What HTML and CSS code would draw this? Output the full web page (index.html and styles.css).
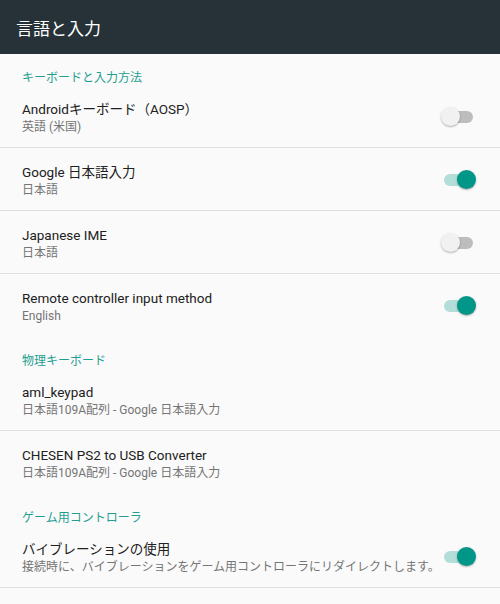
FILE: index.html
```html
<!DOCTYPE html>
<html lang="ja">
<head>
<meta charset="utf-8">
<title>言語と入力</title>
<link rel="stylesheet" href="styles.css">
</head>
<body>
<header class="appbar"><h1 class="appbar-title">言語と入力</h1></header>
<main class="list">
  <div class="section-title">キーボードと入力方法</div>
  <div class="item divided">
    <div class="texts"><div class="title">Androidキーボード（AOSP）</div><div class="sub">英語 (米国)</div></div>
    <span class="switch off"><span class="thumb"></span></span>
  </div>
  <div class="item divided">
    <div class="texts"><div class="title">Google 日本語入力</div><div class="sub">日本語</div></div>
    <span class="switch on"><span class="thumb"></span></span>
  </div>
  <div class="item divided">
    <div class="texts"><div class="title">Japanese IME</div><div class="sub">日本語</div></div>
    <span class="switch off"><span class="thumb"></span></span>
  </div>
  <div class="item">
    <div class="texts"><div class="title">Remote controller input method</div><div class="sub">English</div></div>
    <span class="switch on"><span class="thumb"></span></span>
  </div>
  <div class="section-title">物理キーボード</div>
  <div class="item divided">
    <div class="texts"><div class="title">aml_keypad</div><div class="sub">日本語109A配列 - Google 日本語入力</div></div>
  </div>
  <div class="item">
    <div class="texts"><div class="title">CHESEN PS2 to USB Converter</div><div class="sub">日本語109A配列 - Google 日本語入力</div></div>
  </div>
  <div class="section-title">ゲーム用コントローラ</div>
  <div class="item divided">
    <div class="texts"><div class="title">バイブレーションの使用</div><div class="sub">接続時に、バイブレーションをゲーム用コントローラにリダイレクトします。</div></div>
    <span class="switch on"><span class="thumb"></span></span>
  </div>
</main>
</body>
</html>
```

FILE: styles.css
```css
html, body {
  margin: 0;
  padding: 0;
  background: #fafafa;
  font-family: Roboto, "Noto Sans CJK JP", sans-serif;
}
.appbar {
  height: 54px;
  background: #263238;
  display: flex;
  align-items: center;
  padding: 0 16px;
  box-sizing: border-box;
}
.appbar-title {
  margin: 0;
  font-size: 17px;
  font-weight: 400;
  color: #ffffff;
}
.list {
  display: flex;
  flex-direction: column;
}
.section-title {
  height: 31px;
  box-sizing: border-box;
  padding: 18px 22px 0;
  font-size: 12px;
  line-height: 13px;
  color: #1f9e91;
}
.item {
  height: 63px;
  box-sizing: border-box;
  padding: 15px 27px 0 22px;
  display: flex;
  align-items: flex-start;
  justify-content: space-between;
  border-bottom: 1px solid transparent;
}
.item.divided {
  border-bottom-color: #dedede;
}
.texts {
  display: flex;
  flex-direction: column;
}
.title {
  font-size: 13.5px;
  line-height: 18px;
  color: #212121;
}
.sub {
  font-size: 12px;
  line-height: 18px;
  color: #757575;
}
.switch {
  position: relative;
  width: 29px;
  height: 12px;
  border-radius: 6px;
  margin-top: 11px;
  flex-shrink: 0;
}
.switch.off { background: #bdbdbd; }
.switch.on { background: #b2ddd8; }
.thumb {
  position: absolute;
  top: -4px;
  width: 19px;
  height: 19px;
  border-radius: 50%;
  box-shadow: 0 1px 2px rgba(0,0,0,0.3);
}
.switch.off .thumb { left: -3px; background: #f1f1f1; }
.switch.on .thumb { right: -3px; background: #009688; }
```
